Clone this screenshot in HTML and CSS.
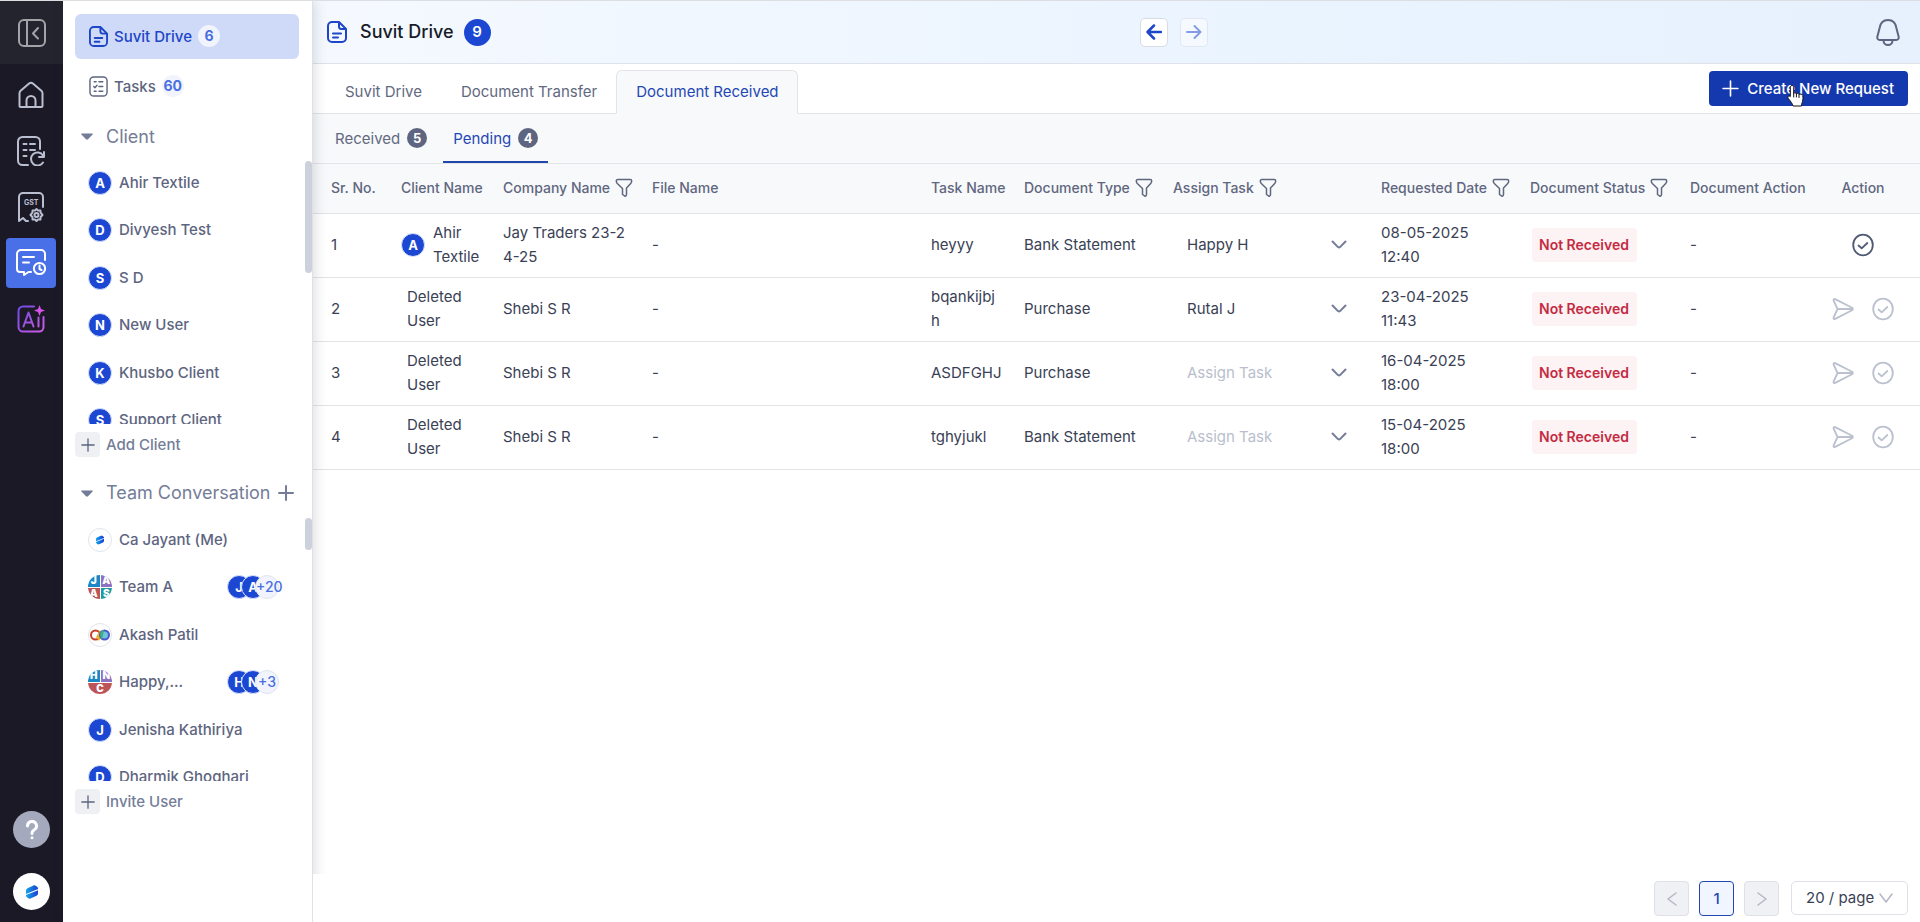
FILE: index.html
```html
<!DOCTYPE html>
<html lang="en">
<head>
<meta charset="utf-8">
<title>Suvit Drive</title>
<link rel="stylesheet" href="styles.css">
</head>
<body>
<svg class="defs" aria-hidden="true">
  <defs>
    <linearGradient id="ai-grad" x1="0" y1="0" x2="1" y2="1"><stop offset="0" stop-color="#6d4be0"/><stop offset="1" stop-color="#d05be6"/></linearGradient>
    <linearGradient id="logo-grad" x1="0" y1="0" x2="1" y2="0"><stop offset="0" stop-color="#12a5ea"/><stop offset="1" stop-color="#1b3fd0"/></linearGradient>
  </defs>
  <symbol id="doc" viewBox="0 0 20 22"><path d="M12 1H5a4 4 0 0 0-4 4v12a4 4 0 0 0 4 4h10a4 4 0 0 0 4-4V8zM12 1v4.500a2.500 2.500 0 0 0 2.500 2.500H19M6 12.500h8M6 16.500h5"/></symbol>
  <symbol id="tasks" viewBox="0 0 20 22"><rect x="1" y="1" width="18" height="20" rx="4"/><path d="M5.500 6h2M10.500 6h4M5 11l1.200 1.200L8.500 9.800M10.500 11h4M5.500 16h2M10.500 16h4"/></symbol>
  <symbol id="filter" viewBox="0 0 18 20"><path d="M2.800 1.500h12.400c1 0 1.500.8 1.500 1.600 0 1-.4 1.800-1 2.400L11.500 10v6.500c0 .8-.6 1.500-1.300 1.800L7.500 16.500V10.500L2.300 5.500C1.700 4.800 1.300 4 1.300 3.100c0-.8.5-1.600 1.500-1.600z"/></symbol>
  <symbol id="chev" viewBox="0 0 16 10"><path d="M1.500 1.500l5.500 5.600q1 .9 2 0l5.500-5.600"/></symbol>
  <symbol id="plus" viewBox="0 0 16 16"><path d="M8 1v14M1 8h14"/></symbol>
  <symbol id="check" viewBox="0 0 22 24"><ellipse cx="11" cy="12" rx="9.800" ry="10.300"/><path d="M6.500 12.500l3.200 2.800 5.600-5.300"/></symbol>
  <symbol id="send" viewBox="0 0 22 24"><path d="M5.500 12L1.600 3.500c-.4-1.100.6-1.900 1.500-1.400l17 8.600c1 .6 1 1.900 0 2.500l-17 8.700c-.9.500-1.900-.3-1.500-1.400zH20"/></symbol>
  <symbol id="tri" viewBox="0 0 12 7"><path d="M1 .5h10c.8 0 1 .6.600 1L7 6.200c-.6.600-1.400.6-2 0L.4 1.500c-.4-.4-.2-1 .6-1z"/></symbol>
  <symbol id="logo" viewBox="0 0 12 14"><path fill="url(#logo-grad)" d="M0 9V5.500Q0 4 1.500 3.300L8 .3Q9 0 9.800.7L12 2.800V4zM12 5.200V8.500q0 1.500-1.500 2.200L4 13.700Q3 14 2.200 13.300L0 11.200V10z"/></symbol>
</svg>
<div class="app">
  <nav class="rail" aria-label="Modules">
    <button class="rail-toggle" aria-label="Collapse menu"><svg class="ico i28" viewBox="0 0 28 28"><rect x="1" y="1" width="26" height="26" rx="5"/><path d="M9 1v26M20 9l-5 5.500 5 5"/></svg></button>
    <div class="rail-items">
      <button class="rail-btn" aria-label="Home"><svg class="ico i28" viewBox="0 0 28 28"><path d="M2.500 12.200c0-1 .3-1.800 1.100-2.500l8.500-7.200c1.200-1 2.600-1 3.800 0l8.500 7.200c.8.700 1.100 1.500 1.100 2.500V25c0 .6-.4 1-1 1h-21c-.6 0-1-.4-1-1zM9.500 26v-6.500a4.500 4.500 0 0 1 9 0V26"/></svg></button>
      <button class="rail-btn" aria-label="Reports"><svg class="ico i30" viewBox="0 0 30 30"><path d="M12 29H6.500A4.500 4.500 0 0 1 2 24.500v-19A4.500 4.500 0 0 1 6.500 1h13A4.500 4.500 0 0 1 24 5.500V13M7.500 8h3M14 8h5M7.500 14h3M14 14h5M7.500 20h3M27 19.500a6.500 6.500 0 1 0 0 7M28 16v5h-5"/></svg></button>
      <button class="rail-btn" aria-label="GST"><svg class="ico i30" viewBox="0 0 30 30"><path d="M27 15V5a4 4 0 0 0-4-4H7a4 4 0 0 0-4 4v24l4-3 3 3h2"/><circle cx="20.500" cy="23" r="2"/><path d="M20.500 17l1.500 1.600 2.400-.2.200 2.300L26.500 23l-1.900 2 -.2 2.600-2.400-.2-1.500 1.800-1.500-1.800-2.400.2-.2-2.600-1.900-2 1.900-2.300.2-2.300 2.400.2z"/><text x="8" y="13" class="gst">GST</text></svg></button>
      <button class="rail-btn active" aria-label="Conversations"><svg class="ico i30" viewBox="0 0 30 30"><path d="M29 12V6a4 4 0 0 0-4-4H5a4 4 0 0 0-4 4v15a3 3 0 0 0 3 3h4v3l4.500-3H15M7 9h11M7 14.500h6"/><circle cx="23.500" cy="20.500" r="5.600"/><path d="M23.500 17.500v3.500l2 1"/></svg></button>
      <button class="rail-btn" aria-label="AI"><svg class="i28 ai" viewBox="0 0 28 28"><path d="M17 1.500H6A4.500 4.500 0 0 0 1.500 6v16A4.500 4.500 0 0 0 6 26.500h16a4.500 4.500 0 0 0 4.500-4.500V12M6.500 21.500l5-14 5 14M8.200 17.500h6.600M21.500 12.500v9"/><path class="star" d="M22.500 0l1.500 4 4 1.500-4 1.500-1.500 4-1.500-4-4-1.500 4-1.500z"/></svg></button>
    </div>
    <div class="rail-bottom">
      <button class="round help" aria-label="Help"><svg viewBox="0 0 14 20"><path d="M2.500 6a4.500 4.500 0 1 1 6.800 3.800C7.700 10.800 7 11.500 7 13.500"/><circle cx="7" cy="17.800" r="1.500"/></svg></button>
      <button class="round brand" aria-label="Account"><svg width="12" height="14"><use href="#logo"/></svg></button>
    </div>
  </nav>

  <aside class="side">
    <a href="#" class="nav active"><svg class="ico doc"><use href="#doc"/></svg>Suvit Drive<span class="count">6</span></a>
    <a href="#" class="nav"><svg class="ico doc tasks"><use href="#tasks"/></svg>Tasks<span class="count">60</span></a>
    <button class="group"><svg class="tri"><use href="#tri"/></svg>Client</button>
    <div class="list">
      <a href="#"><span class="av">A</span>Ahir Textile</a>
      <a href="#"><span class="av">D</span>Divyesh Test</a>
      <a href="#"><span class="av">S</span>S D</a>
      <a href="#"><span class="av">N</span>New User</a>
      <a href="#"><span class="av">K</span>Khusbo Client</a>
      <a href="#"><span class="av">S</span>Support Client</a>
      <i class="thumb long"></i>
    </div>
    <button class="add"><span class="sq"><svg class="plus"><use href="#plus"/></svg></span>Add Client</button>
    <div class="group-row">
      <button class="group"><svg class="tri"><use href="#tri"/></svg>Team Conversation</button>
      <button class="new" aria-label="New conversation"><svg class="plus"><use href="#plus"/></svg></button>
    </div>
    <div class="list">
      <a href="#"><span class="av pic"><svg width="8" height="10" viewBox="0 0 12 14"><use href="#logo" width="12" height="14"/></svg></span>Ca Jayant (Me)</a>
      <a href="#"><span class="av quad"><b>J</b><b>A</b><b>A</b><b>S</b></span>Team A<span class="stack"><span class="av">J</span><span class="av">A</span><span class="more">+20</span></span></a>
      <a href="#"><span class="av pic"><svg width="20" height="14" viewBox="0 0 20 14"><circle cx="5.500" cy="7" r="4.500" stroke="#c8402c"/><path d="M6 9l4-7 2 6-3 5z" fill="#e8b52a" stroke="none"/><circle cx="14.500" cy="7" r="4.500" fill="#6fc4dc" stroke="#4a58c8"/><path d="M10 7a5 5 0 0 1 4-5l-2 10z" fill="#3bb27c" stroke="none"/></svg></span>Akash Patil</a>
      <a href="#"><span class="av quad three"><b>H</b><b>N</b><b>C</b></span>Happy,...<span class="stack"><span class="av">H</span><span class="av">N</span><span class="more">+3</span></span></a>
      <a href="#"><span class="av">J</span>Jenisha Kathiriya</a>
      <a href="#"><span class="av">D</span>Dharmik Ghoghari</a>
      <i class="thumb"></i>
    </div>
    <button class="add"><span class="sq"><svg class="plus"><use href="#plus"/></svg></span>Invite User</button>
  </aside>

  <main class="main">
    <header class="top">
      <div class="title"><svg class="ico doc"><use href="#doc"/></svg><h1>Suvit Drive</h1><span class="total">9</span></div>
      <div class="history">
        <button aria-label="Back"><svg class="arrow" viewBox="0 0 16 16"><path d="M15 8H1.500M8 1.500L1.500 8 8 14.500"/></svg></button>
        <button aria-label="Forward" disabled><svg class="arrow thin" viewBox="0 0 16 16"><path d="M1 8h13.500M8.500 2l6 6-6 6"/></svg></button>
      </div>
      <button class="bell" aria-label="Notifications"><svg class="ico" viewBox="0 0 24 27"><path d="M12 1C7 1 4.300 4.500 3.600 9L1.400 17.500c-.5 2 .5 3.500 2.400 3.500h16.400c1.900 0 2.900-1.500 2.400-3.500L20.400 9C19.700 4.500 17 1 12 1zM7.500 21.500a4.500 4.500 0 0 0 9 0"/></svg></button>
    </header>
    <div class="tabs">
      <nav class="tab-list"><a href="#">Suvit Drive</a><a href="#">Document Transfer</a><a href="#" class="active">Document Received</a></nav>
      <button class="create"><svg class="plus"><use href="#plus"/></svg>Create New Request
        <svg class="hand" viewBox="0 0 17 22"><path d="M5 .5c1 0 1.700.7 1.700 1.700v6c.4-.5 2.300-.5 2.700.5.600-.6 2.200-.4 2.600.6.600-.5 3.600-.3 3.800 1.200.3 2.500.2 4-.3 6-.4 1.500-1 2-1 4.500H6.200C5.500 19 3.500 16 1.300 13.500.2 11.800 1.700 10 3.300 11.600V2.200c0-1 .7-1.700 1.700-1.700z"/><path d="M6.700 8v4M9.400 9v3M12 9.500v3"/></svg>
      </button>
    </div>
    <nav class="subtabs"><a href="#">Received<span class="num">5</span></a><a href="#" class="active">Pending<span class="num">4</span></a></nav>
    <div class="content">
      <table class="grid">
        <colgroup><col class="c-sr"><col class="c-client"><col class="c-mid"><col><col class="c-task"><col class="c-mid"><col class="c-assign"><col class="c-mid"><col class="c-status"><col class="c-doc"><col class="c-act"></colgroup>
        <thead><tr>
          <th>Sr. No.</th><th>Client Name</th>
          <th><span class="th">Company Name<button aria-label="Filter company"><svg class="filter"><use href="#filter"/></svg></button></span></th>
          <th>File Name</th><th>Task Name</th>
          <th><span class="th">Document Type<button aria-label="Filter type"><svg class="filter"><use href="#filter"/></svg></button></span></th>
          <th><span class="th">Assign Task<button aria-label="Filter assignee"><svg class="filter"><use href="#filter"/></svg></button></span></th>
          <th><span class="th">Requested Date<button aria-label="Filter date"><svg class="filter"><use href="#filter"/></svg></button></span></th>
          <th><span class="th">Document Status<button aria-label="Filter status"><svg class="filter"><use href="#filter"/></svg></button></span></th>
          <th>Document Action</th><th class="center">Action</th>
        </tr></thead>
        <tbody>
          <tr><td>1</td><td><span class="client"><span class="av">A</span>Ahir Textile</span></td><td class="brk">Jay Traders 23-24-25</td><td>-</td><td class="brk">heyyy</td><td>Bank Statement</td>
            <td><label class="pick"><select aria-label="Assign task 1"><option>Happy H</option></select><svg class="chev"><use href="#chev"/></svg></label></td>
            <td class="date">08-05-2025 12:40</td><td><span class="chip">Not Received</span></td><td>-</td>
            <td><span class="acts"><button aria-label="Mark received"><svg class="act"><use href="#check"/></svg></button></span></td></tr>
          <tr><td>2</td><td><span class="client gone">Deleted User</span></td><td>Shebi S R</td><td>-</td><td class="brk">bqankijbjh</td><td>Purchase</td>
            <td><label class="pick"><select aria-label="Assign task 2"><option>Rutal J</option></select><svg class="chev"><use href="#chev"/></svg></label></td>
            <td class="date">23-04-2025 11:43</td><td><span class="chip">Not Received</span></td><td>-</td>
            <td><span class="acts"><button disabled aria-label="Send"><svg class="act"><use href="#send"/></svg></button><button disabled aria-label="Mark received"><svg class="act"><use href="#check"/></svg></button></span></td></tr>
          <tr><td>3</td><td><span class="client gone">Deleted User</span></td><td>Shebi S R</td><td>-</td><td class="brk">ASDFGHJ</td><td>Purchase</td>
            <td><label class="pick empty"><select aria-label="Assign task 3"><option>Assign Task</option></select><svg class="chev"><use href="#chev"/></svg></label></td>
            <td class="date">16-04-2025 18:00</td><td><span class="chip">Not Received</span></td><td>-</td>
            <td><span class="acts"><button disabled aria-label="Send"><svg class="act"><use href="#send"/></svg></button><button disabled aria-label="Mark received"><svg class="act"><use href="#check"/></svg></button></span></td></tr>
          <tr><td>4</td><td><span class="client gone">Deleted User</span></td><td>Shebi S R</td><td>-</td><td class="brk">tghyjukl</td><td>Bank Statement</td>
            <td><label class="pick empty"><select aria-label="Assign task 4"><option>Assign Task</option></select><svg class="chev"><use href="#chev"/></svg></label></td>
            <td class="date">15-04-2025 18:00</td><td><span class="chip">Not Received</span></td><td>-</td>
            <td><span class="acts"><button disabled aria-label="Send"><svg class="act"><use href="#send"/></svg></button><button disabled aria-label="Mark received"><svg class="act"><use href="#check"/></svg></button></span></td></tr>
        </tbody>
      </table>
    </div>
    <footer class="pager">
      <button disabled aria-label="Previous page"><svg viewBox="0 0 10 14"><path d="M9 1L1 7l8 6"/></svg></button>
      <button class="current">1</button>
      <button disabled aria-label="Next page"><svg viewBox="0 0 10 14"><path d="M1 1l8 6-8 6"/></svg></button>
      <label class="size"><select aria-label="Rows per page"><option>20 / page</option></select><svg viewBox="0 0 14 10"><path d="M1 1l6 8 6-8"/></svg></label>
    </footer>
  </main>
</div>
</body>
</html>
```
FILE: styles.css
```css
* { box-sizing: border-box; }
body { margin: 0; font: 400 15px/24px Inter, "Liberation Sans", sans-serif; color: #3a4155; background: #fff; }
button { font: inherit; color: inherit; background: none; border: 0; padding: 0; display: flex; align-items: center; justify-content: center; }
a { color: inherit; text-decoration: none; }
svg { fill: none; stroke: currentColor; stroke-width: 2; stroke-linecap: round; stroke-linejoin: round; flex: none; display: block; }
.defs { position: absolute; width: 0; height: 0; }
#logo path { stroke: none; }
.app { display: flex; height: 100vh; border-top: 1px solid #dcdee2; overflow: hidden; }

/* icon rail */
.rail { width: 63px; flex: none; background: #1b1926; color: #b9bed0; display: flex; flex-direction: column; }
.rail-toggle { height: 63px; background: #24242e; color: #a3a3a8; }
.i28 { width: 28px; height: 28px; }
.i30 { width: 30px; height: 30px; }
.rail-items { display: grid; gap: 6px; justify-content: start; padding: 6px 0 0 6px; }
.rail-btn { width: 50px; height: 50px; border-radius: 4px; }
.rail-btn.active { background: #4a70e8; color: #fff; }
.gst { font-size: 7px; font-weight: 700; fill: currentColor; stroke: none; }
.ai { stroke: url(#ai-grad); }
.ai .star { fill: #d553ea; stroke: none; }
.rail-bottom { margin-top: auto; padding-bottom: 12px; display: grid; gap: 25px; justify-content: center; }
.round { width: 37px; height: 37px; border-radius: 50%; }
.help { background: #a4a9bd; color: #fff; }
.help svg { width: 14px; height: 20px; stroke-width: 3; }
.help circle { fill: #fff; stroke: none; }
.brand { background: #fff; }

/* sidebar */
.side { width: 250px; flex: none; padding-top: 13px; border-right: 1px solid #dfe1e6; color: #5d6580; font-weight: 500; background: #fff; position: relative; z-index: 2; box-shadow: 2px 0 12px rgba(40, 45, 60, .16); }
.nav { display: flex; align-items: center; height: 45px; margin: 0 13px 5px 12px; padding-left: 14px; border-radius: 6px; }
.nav.active { background: #cfd9f8; color: #1d46c8; }
.doc { width: 19px; height: 21px; margin-right: 6px; }
.tasks { stroke-width: 1.5; }
.count { display: grid; place-items: center; width: 22px; height: 22px; margin: 0 0 2px 6px; border-radius: 50%; background: #f1f4fd; color: #4a6fe0; font-weight: 700; font-size: 14px; line-height: 22px; }
.group { height: 45px; font-size: 18px; font-weight: 400; color: #747d98; padding-left: 18px; }
.tri { width: 12px; height: 7px; fill: #747d98; stroke: none; margin-right: 13px; }
.group-row { display: flex; align-items: center; justify-content: space-between; height: 46px; padding-right: 18px; margin-top: 13px; color: #747d98; }
.plus { width: 16px; height: 16px; }
.list { height: 265px; overflow: hidden; position: relative; }
.list a { display: flex; align-items: center; height: 47px; padding: 0 33px 0 25px; }
.list a:nth-child(even) { height: 48px; }
.av { display: grid; place-items: center; flex: none; width: 24px; height: 24px; margin-right: 7px; border-radius: 50%; background: #1b47d2; border: 1px solid #dbe4fb; color: #fff; font: 700 13px/22px Inter, sans-serif; }
.av.pic { background: #fff; border-color: #e2e4ea; }
.quad { grid-template: 1fr 1fr / 1fr 1fr; place-items: stretch; gap: 1px; overflow: hidden; border: 0; background: #fff; font-size: 10px; line-height: 11px; }
.quad b { text-align: center; background: #1b87c6; }
.quad b:nth-child(2) { background: #8c72c0; }
.quad b:nth-child(3) { background: #bd5458; }
.quad b:nth-child(4) { background: #1f9aa0; }
.three b:nth-child(3) { grid-column: span 2; }
.stack { display: flex; margin-left: auto; }
.stack .av { margin-right: -10px; }
.more { display: grid; place-items: center; width: 24px; height: 24px; border-radius: 50%; background: #f1f4fd; border: 1px solid #e2e5ee; color: #4a6fe0; font-size: 14px; line-height: 22px; z-index: 1; }
.thumb { position: absolute; right: 0; top: 2px; width: 7px; height: 32px; border-radius: 4px; background: #cdd1db; }
.thumb.long { height: 112px; }
.add { height: 25px; margin: 8px 0 0 12px; font-weight: 500; color: #747d98; }
.sq { display: grid; place-items: center; width: 25px; height: 25px; margin-right: 6px; border-radius: 4px; background: #eff0f3; color: #5d6580; }
.sq .plus { width: 14px; height: 14px; stroke-width: 1.500; }

/* main */
.main { flex: 1; min-width: 0; display: flex; flex-direction: column; }
.top { height: 63px; flex: none; display: grid; grid-template-columns: 27fr auto 23fr; align-items: center; padding: 0 20px 0 14px; border-bottom: 1px solid #dfe2e8; background: linear-gradient(90deg, #f5f9ff, #eaf4ff 60%, #e6f1fd); }
.title { display: flex; align-items: center; color: #1d46c8; }
.title .doc { width: 20px; height: 22px; margin-right: 13px; }
h1 { margin: 0; font-size: 18px; font-weight: 500; color: #171c28; }
.total { display: grid; place-items: center; width: 27px; height: 27px; margin-left: 10px; border-radius: 50%; background: #1b47d2; color: #fff; font-weight: 600; }
.history { display: flex; gap: 12px; }
.history button { width: 28px; height: 29px; border: 1px solid #d8dce3; border-radius: 5px; background: #fff; color: #1d46c8; }
.history button:disabled { opacity: .5; }
.arrow { width: 16px; height: 16px; stroke-width: 2.500; }
.arrow.thin { stroke-width: 2; }
.bell { justify-self: end; color: #5d6580; }
.bell svg { width: 24px; height: 27px; }
.tabs { display: flex; justify-content: space-between; height: 50px; flex: none; padding: 0 12px; border-bottom: 1px solid #e2e4e8; color: #62697f; }
.tab-list { display: flex; align-items: flex-end; }
.tab-list a { height: 44px; margin-bottom: -1px; padding: 9px 18px 9px 19px; border: 1px solid transparent; border-radius: 6px 6px 0 0; }
.tab-list .active { color: #1f48b4; background: #f8f9fb; border-color: #e2e4e8 #e2e4e8 #f8f9fb; }
.create { position: relative; height: 35px; margin-top: 7px; padding: 0 14px 0 13px; gap: 8px; border-radius: 4px; background: #1439ae; color: #fff; font-weight: 500; }
.create .plus { width: 17px; height: 17px; stroke-width: 1.500; }
.hand { position: absolute; left: 78px; top: 14px; width: 17px; height: 22px; fill: #fff; stroke: #111; stroke-width: 1; }
.subtabs { display: flex; height: 50px; flex: none; padding-left: 12px; border-bottom: 1px solid #e2e4e8; background: #f8f9fb; color: #62697f; }
.subtabs a { display: flex; align-items: center; gap: 7px; padding: 2px 10px 0; border-bottom: 2px solid transparent; }
.subtabs .active { color: #1f48b4; border-color: #1f48a8; margin-left: 6px; }
.num { display: grid; place-items: center; width: 20px; height: 20px; margin-bottom: 2px; border-radius: 50%; background: #5d6580; color: #fff; font-size: 13px; font-weight: 700; line-height: 20px; }

/* table */
.content { flex: 1; min-height: 0; overflow: hidden; }
.grid { width: 100%; table-layout: fixed; border-collapse: separate; border-spacing: 0; }
.c-sr { width: 78px; }
.c-client { width: 102px; }
.c-mid { width: 149px; }
.c-task { width: 93px; }
.c-assign { width: 208px; }
.c-status { width: 160px; }
.c-doc { width: 126px; }
.c-act { width: 114px; }
th, td { padding: 0 10px 2px; text-align: left; border-bottom: 1px solid #e2e4e8; }
th:first-child, td:first-child { padding-left: 18px; }
th { height: 50px; background: #f8f9fb; color: #5f677f; font-weight: 500; font-size: 14px; white-space: nowrap; }
th.center { text-align: center; }
td { height: 64px; }
.th { display: flex; align-items: center; gap: 5px; }
.filter { width: 18px; height: 20px; stroke-width: 1.500; }
.brk { word-break: break-all; padding-right: 12px; }
.date { padding-right: 36px; }
.client { display: flex; align-items: center; }
.client .av { margin-right: 8px; }
.gone { padding-left: 6px; }
.pick { display: grid; align-items: center; margin-right: 14px; }
.pick > *, .size > * { grid-area: 1 / 1; }
select { appearance: none; border: 0; background: none; font: inherit; color: inherit; padding: 0; margin: 0; width: 100%; }
.pick select { padding-left: 14px; height: 32px; }
.pick.empty select { color: #b9becc; }
.chev { width: 16px; height: 10px; justify-self: end; color: #747d98; pointer-events: none; }
.chip { display: inline-block; height: 34px; margin-left: 2px; padding: 5px 8px 5px 7px; border-radius: 4px; background: #fdf3f4; color: #c42b42; font-size: 14px; font-weight: 600; white-space: nowrap; vertical-align: middle; }
.acts { display: flex; justify-content: center; gap: 18px; color: #515a74; }
.acts button:disabled { color: #bcc1d0; }
.act { width: 22px; height: 24px; stroke-width: 1.800; }

/* pagination */
.pager { position: relative; z-index: 3; display: flex; justify-content: flex-end; gap: 10px; height: 48px; flex: none; padding: 7px 12px; background: #fff; }
.pager button { width: 35px; height: 35px; border: 1px solid #dfe1e6; border-radius: 4px; background: #f0f1f4; color: #b3b8c6; }
.pager svg { width: 10px; height: 14px; stroke-width: 1.500; }
.pager .current { border-color: #1f48b4; background: #f0f5ff; color: #1f48b4; font-weight: 500; }
.size { display: grid; align-items: center; width: 117px; height: 34px; margin-left: 2px; border: 1px solid #dfe1e6; border-radius: 5px; }
.size select { padding-left: 14px; height: 32px; }
.pager .size svg { width: 14px; height: 10px; justify-self: end; margin-right: 14px; color: #b3b8c6; pointer-events: none; }
```
